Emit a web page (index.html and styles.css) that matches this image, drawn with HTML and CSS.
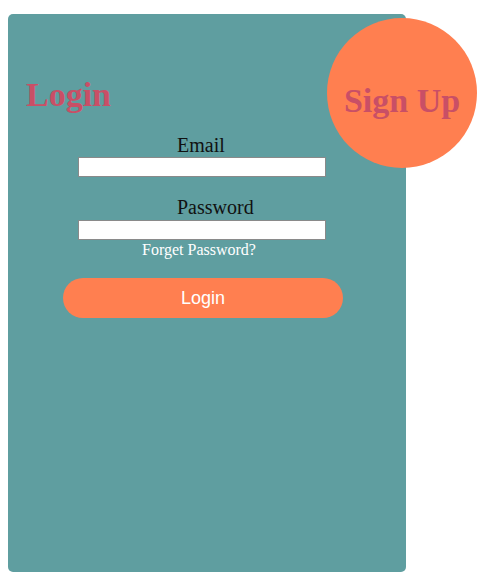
FILE: index.html
```html
<!DOCTYPE html>
<html lang="en">
<head>
    <meta charset="UTF-8">
    <meta name="viewport" content="width=device-width, initial-scale=1.0">
    <title>Login</title>
    <link rel="stylesheet" href="styles.css">
</head>
<body>

    <div class="card">
        <h1 class="title">Login</h1>

        <div class="signup">Sign Up</div>

        <form class="form">
            <label class="label" for="email">Email</label>
            <input class="field" type="text" id="email" />

            <label class="label label-gap" for="password">Password</label>
            <input class="field field-gap" type="password" id="password" />
            <a class="forget" href="#">Forget Password?</a>

            <button class="btn" type="button">Login</button>
        </form>
    </div>

</body>
</html>
```

FILE: styles.css
```css
body {
    margin: 8px;
    font-family: "Liberation Serif", "Times New Roman", serif;
}
.card {
    position: relative;
    margin-top: 6px;
    width: 398px;
    height: 558px;
    box-sizing: border-box;
    padding: 61px 0 0 18px;
    background-color: #5f9ea0; /* cadetblue */
    border-radius: 5px;
}
.title {
    margin: 0;
    font-size: 34px;
    line-height: 40px;
    color: #c94f66;
}
.signup {
    position: absolute;
    top: 4px;
    left: 319px;
    width: 150px;
    height: 150px;
    box-sizing: border-box;
    padding-top: 63px;
    border-radius: 50%;
    background-color: #ff7f50; /* coral */
    color: #c94f66;
    font-size: 34px;
    font-weight: bold;
    line-height: 40px;
    text-align: center;
}
.form {
    display: flex;
    flex-direction: column;
    width: 280px;
    margin: 19px 0 0 37px;
}
.label {
    font-size: 20px;
    line-height: 23px;
    padding-left: 114px;
    color: #111;
}
.label-gap {
    margin-top: 19px;
}
.field {
    width: 248px;
    height: 20px;
    margin: 0 0 0 15px;
    padding: 0 2px;
    box-sizing: border-box;
    border: 1px solid #8a8a8a;
    background: #fff;
}
.field-gap {
    margin-top: 1px;
}
.forget {
    margin-top: 1px;
    padding-right: 8px;
    font-size: 16px;
    line-height: 18px;
    text-align: center;
    color: #fff;
    text-decoration: none;
}
.btn {
    margin-top: 19px;
    height: 40px;
    border: none;
    border-radius: 20px;
    background-color: #ff7f50;
    color: #fff;
    font-family: "Liberation Sans", Arial, sans-serif;
    font-size: 18px;
    cursor: pointer;
}
```
